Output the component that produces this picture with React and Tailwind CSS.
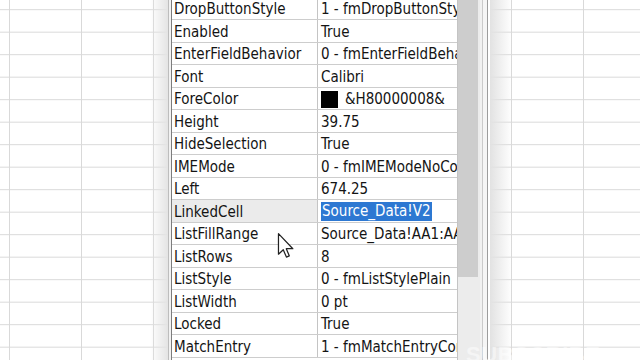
import React from 'react';

const rows = [
    ['DropButtonStyle', '1 - fmDropButtonStyleArrow'],
    ['Enabled', 'True'],
    ['EnterFieldBehavior', '0 - fmEnterFieldBehaviorSelectAll'],
    ['Font', 'Calibri'],
    ['ForeColor', '&H80000008&', 'swatch'],
    ['Height', '39.75'],
    ['HideSelection', 'True'],
    ['IMEMode', '0 - fmIMEModeNoControl'],
    ['Left', '674.25'],
    ['LinkedCell', 'Source_Data!V2', 'selected'],
    ['ListFillRange', 'Source_Data!AA1:AA8'],
    ['ListRows', '8'],
    ['ListStyle', '0 - fmListStylePlain'],
    ['ListWidth', '0 pt'],
    ['Locked', 'True'],
    ['MatchEntry', '1 - fmMatchEntryComplete'],
];

function Sheet({ className = '' }) {
    return (
        <div
            className={`h-full bg-white bg-[linear-gradient(to_right,#d9d9d9_1px,transparent_1px),linear-gradient(to_bottom,#d9d9d9_1px,transparent_1px)] bg-[size:72px_100%,100%_22.5px] ${className}`}
        />
    );
}

function PropRow({ name, value, kind }) {
    const selected = kind === 'selected';
    return (
        <div className="flex h-[22.5px] border-b border-[#cdcdcd]">
            <div className={`w-[146px] shrink-0 pl-[2px] pt-[2px] flex items-center border-r border-[#c4c4c4] whitespace-nowrap overflow-hidden ${selected ? 'bg-[#ebebeb]' : ''}`}>
                {name}
            </div>
            <div className="flex-1 min-w-0 pl-[3px] pt-[2px] flex items-center whitespace-nowrap overflow-hidden">
                {kind === 'swatch' && <span className="w-[17px] h-[17px] bg-black mr-[7px] shrink-0" />}
                {selected ? (
                    <span className="bg-[#2d78d2] text-white px-[1px] leading-[19px]">{value}</span>
                ) : (
                    value
                )}
            </div>
        </div>
    );
}

export default function App() {
    return (
        <div className="relative w-[640px] h-[360px] overflow-hidden bg-white flex font-['DejaVu_Sans_Condensed','DejaVu_Sans',sans-serif] text-[15px] text-[#141414]">
            {/* spreadsheet left */}
            <div className="relative w-[168px] shrink-0">
                <Sheet className="bg-[position:9px_0,0_9.2px]" />
                <div className="absolute top-0 right-0 w-[18px] h-full bg-gradient-to-r from-transparent to-[#e4e4e4]" />
            </div>

            {/* properties window */}
            <div className="flex w-[322px] shrink-0 h-full">
                <div className="w-px bg-[#bdbdbd]" />
                <div className="w-[2px] bg-[#f2f2f2]" />
                <div className="w-px bg-[#7d7d7d]" />
                <div className="w-[286px] shrink-0 bg-white border-r border-[#c4c4c4] overflow-hidden">
                    <div className="-mt-[2.5px]">
                        {rows.map(([n, v, k]) => (
                            <PropRow key={n} name={n} value={v} kind={k} />
                        ))}
                    </div>
                </div>
                <div className="w-[22px] shrink-0 bg-[#ececec] flex flex-col">
                    <div className="h-[277px] bg-[#cdcdcd] mr-[2px]" />
                </div>
                <div className="w-[2px] bg-[#f1f1f1]" />
                <div className="w-px bg-[#cacaca]" />
                <div className="w-[4px] bg-[#f5f5f5]" />
                <div className="w-px bg-[#9c9c9c]" />
            </div>

            {/* spreadsheet right */}
            <div className="relative flex-1">
                <Sheet className="bg-[position:21px_0,0_9.2px]" />
                <div className="absolute top-0 left-0 w-[22px] h-full bg-gradient-to-r from-[#e2e2e2] to-transparent" />
            </div>

            {/* mouse pointer */}
            <svg className="absolute left-[277px] top-[233px]" width="18" height="26" viewBox="0 0 12 19">
                <path
                    d="M0.5 0.5 L0.5 15.5 L4 12.2 L6.3 17.6 L8.4 16.7 L6.2 11.5 L11 11.5 Z"
                    fill="#fff"
                    stroke="#222"
                    strokeWidth="0.9"
                    strokeLinejoin="round"
                />
            </svg>

            {/* faint watermark */}
            <div className="absolute left-[466px] top-[338px] text-[22px] font-bold tracking-wide text-white/50 font-['Liberation_Sans',sans-serif]">
                SUBSCRIBE
            </div>
        </div>
    );
}
